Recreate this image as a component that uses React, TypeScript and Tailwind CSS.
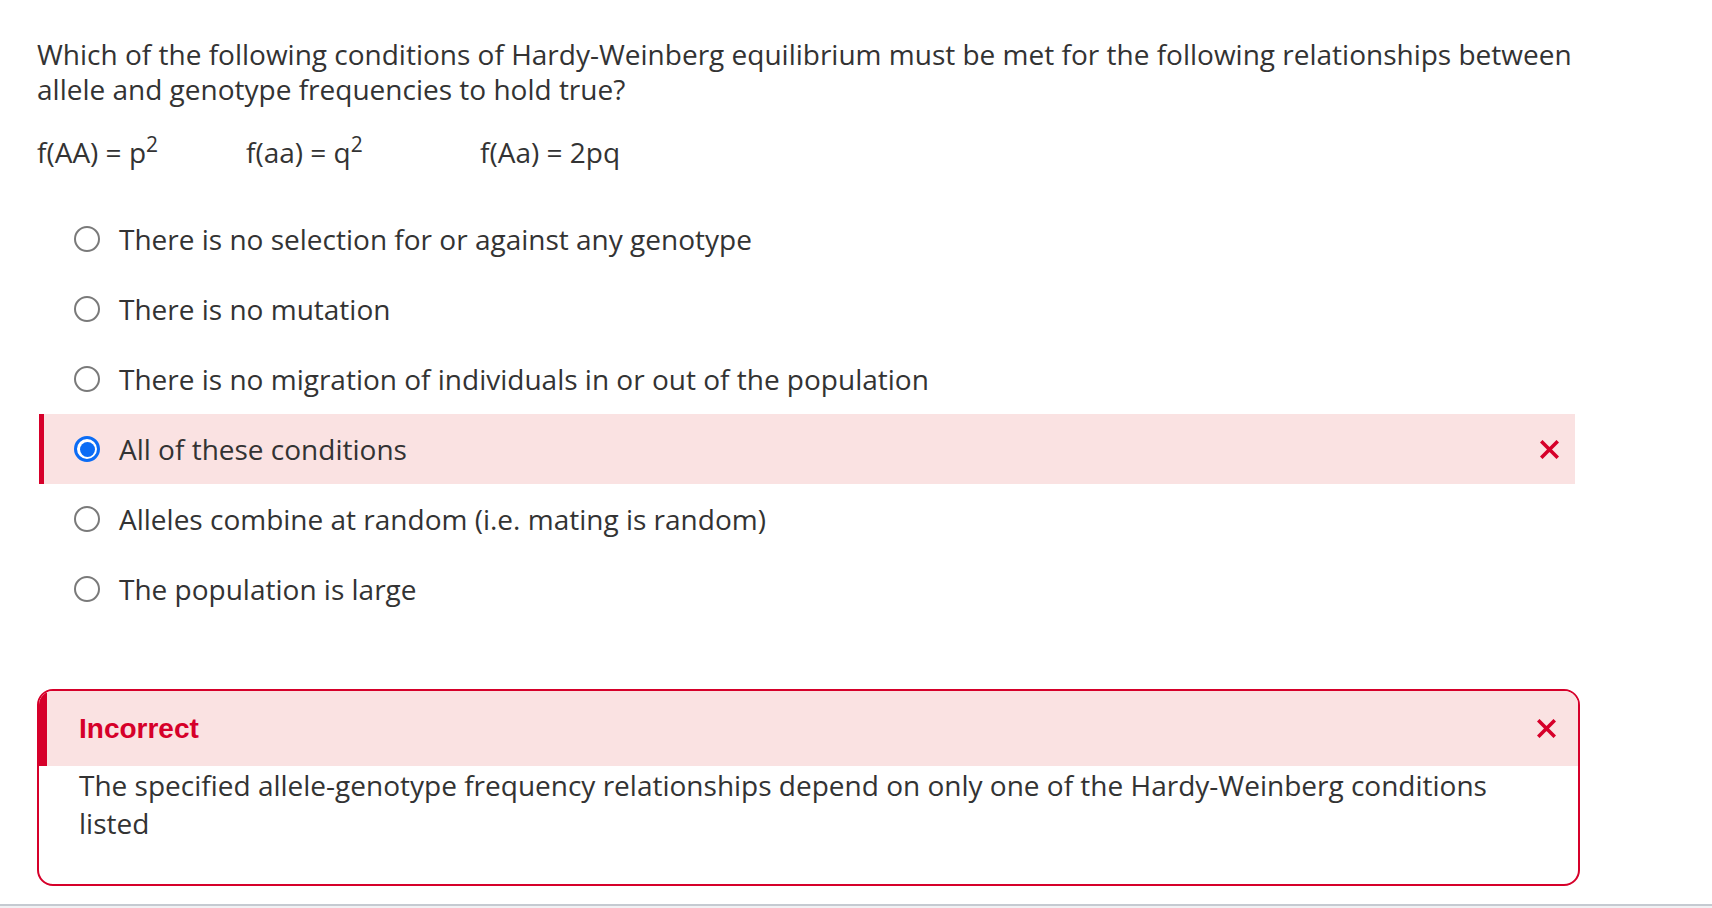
import React from "react";

const RED = "#d6002a";

function XIcon({ size = 19 }: { size?: number }) {
  return (
    <svg width={size} height={size} viewBox="0 0 19 19" className="shrink-0">
      <path d="M2.5 2.5 L16.5 16.5 M16.5 2.5 L2.5 16.5" stroke={RED} strokeWidth="3.6" strokeLinecap="square" fill="none" />
    </svg>
  );
}

function Radio({ checked }: { checked: boolean }) {
  if (checked) {
    return (
      <span className="w-[26px] h-[26px] rounded-full border-[3px] border-[#0b6cf5] bg-white flex items-center justify-center shrink-0">
        <span className="w-[15px] h-[15px] rounded-full bg-[#0b6cf5]" />
      </span>
    );
  }
  return <span className="w-[26px] h-[26px] rounded-full border-2 border-[#7a7a7a] bg-white shrink-0" />;
}

const options = [
  "There is no selection for or against any genotype",
  "There is no mutation",
  "There is no migration of individuals in or out of the population",
  "All of these conditions",
  "Alleles combine at random (i.e. mating is random)",
  "The population is large",
];

export default function App() {
  return (
    <div
      className="w-[1712px] h-[908px] bg-white flex flex-col text-[#333333]"
      style={{ fontFamily: '"Open Sans", "Noto Sans", sans-serif' }}
    >
      <div className="flex-1 pl-[37px] pt-[37px] w-[1579px]">
        <p className="text-[28px] leading-[35px] w-[1542px]">
          Which of the following conditions of Hardy-Weinberg equilibrium must be met for the following relationships between allele and genotype frequencies to hold true?
        </p>
        <div className="flex text-[28px] leading-[35px] mt-[28px]">
          <span className="w-[209px]">
            f(AA) = p<sup className="text-[21px] leading-none relative top-[-11px]">2</sup>
          </span>
          <span className="w-[234px]">
            f(aa) = q<sup className="text-[21px] leading-none relative top-[-11px]">2</sup>
          </span>
          <span>f(Aa) = 2pq</span>
        </div>
        <div className="mt-[34px] ml-[2px] w-[1536px] flex flex-col">
          {options.map((o, i) => {
            const sel = i === 3;
            return (
              <div
                key={o}
                className={
                  sel
                    ? "h-[70px] flex items-center pl-[30px] pr-[16px] bg-[#fae2e2] border-l-[5px] border-[#d6002a]"
                    : "h-[70px] flex items-center pl-[35px] pr-[16px]"
                }
              >
                <Radio checked={sel} />
                <span className="ml-[19px] text-[28px] leading-[35px] flex-1">{o}</span>
                {sel && <XIcon />}
              </div>
            );
          })}
        </div>
        <div className="mt-[65px] w-[1543px] h-[197px] border-2 border-[#d6002a] rounded-[16px] overflow-hidden flex flex-col">
          <div className="h-[75px] bg-[#fae2e2] border-l-[8px] border-[#d6002a] flex items-center pl-[32px] pr-[22px]">
            <span
              className="flex-1 text-[28px] font-bold text-[#d6002a]"
              style={{ fontFamily: '"Liberation Sans", Arial, sans-serif' }}
            >
              Incorrect
            </span>
            <XIcon />
          </div>
          <p className="pl-[40px] pr-[40px] text-[28px] leading-[38px]">
            The specified allele-genotype frequency relationships depend on only one of the Hardy-Weinberg conditions listed
          </p>
        </div>
      </div>
      <div className="h-[4px] border-t-2 border-[#c5cad1] bg-[#f1f2f4]" />
    </div>
  );
}
